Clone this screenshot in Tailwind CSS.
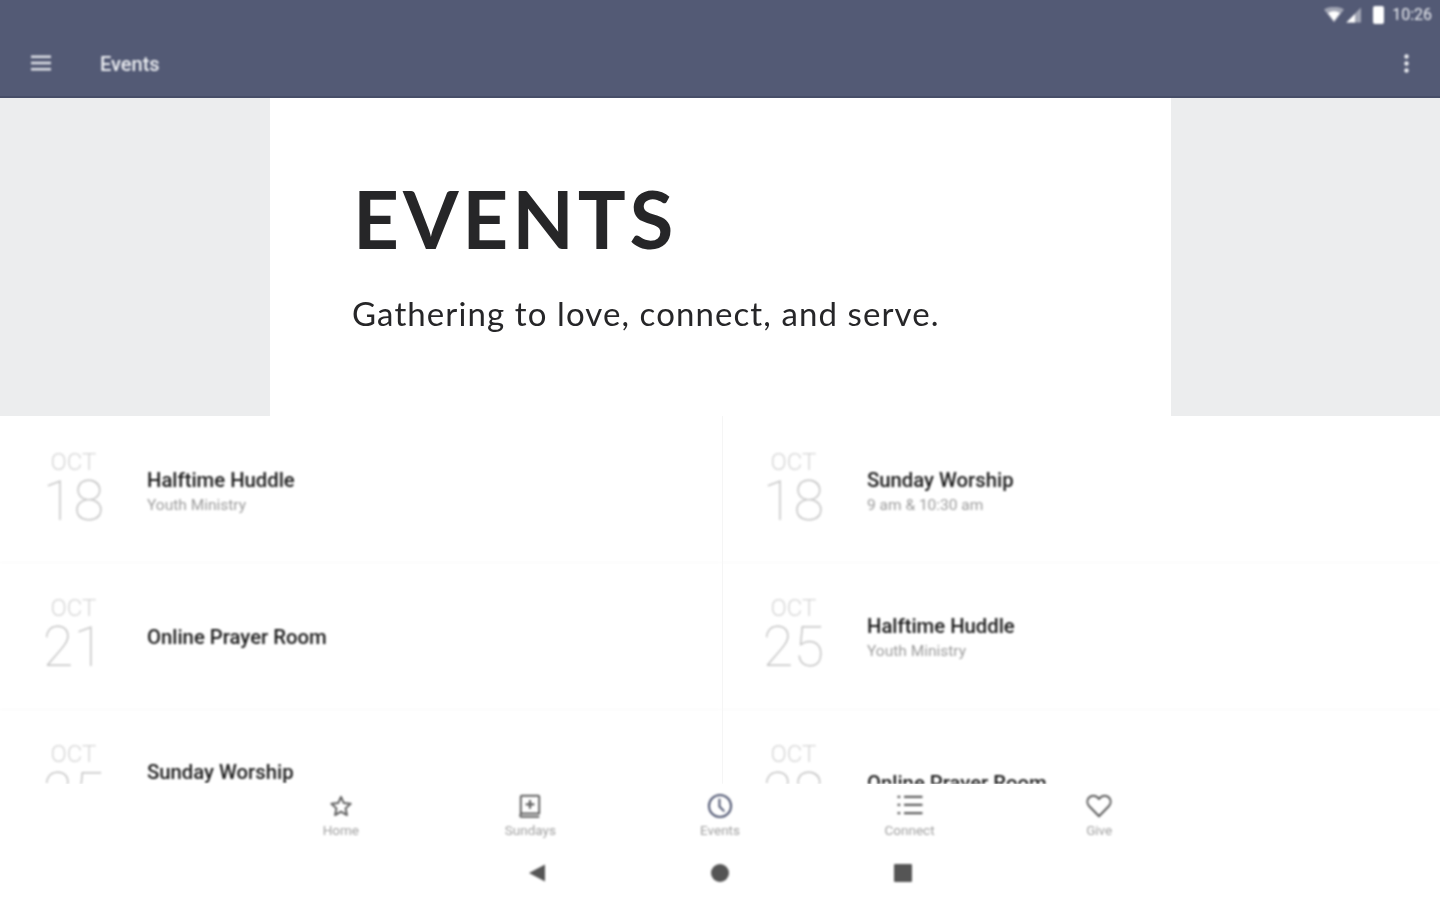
<!DOCTYPE html>
<html lang="en">
<head>
  <meta charset="UTF-8">
  <title>Events</title>
  <script src="https://cdn.jsdelivr.net/npm/@tailwindcss/browser@4"></script>
</head>
<body class="bg-white font-['Roboto',sans-serif] overflow-hidden">
  <div class="w-[1440px] h-[900px] flex flex-col overflow-hidden">

    <!-- app bar -->
    <header class="h-[98px] shrink-0 bg-[#535a75] border-b-2 border-[#474e68] flex flex-col text-[#eceef2]">
      <div class="h-[30px] flex items-center justify-end pr-2 gap-[11px] blur-[0.8px]">
        <div class="flex items-center gap-[2px]">
          <svg width="20" height="16" viewBox="0 0 20 16"><path d="M0 2.5C5.5-1 14.500-1 20 2.500L10 15.500Z" fill="#fff" fill-opacity=".45"/><path d="M4 6C7.500 3.800 12.500 3.800 16 6L10 14Z" fill="#fff"/></svg>
          <svg width="16" height="16" viewBox="0 0 16 16"><path d="M15 0.500V15.500H0Z" fill="#fff" fill-opacity=".45"/><path d="M9 7V15.500H0.500Z" fill="#fff"/></svg>
        </div>
        <div class="w-[11px] h-[18px] bg-white rounded-[2px]"></div>
        <span class="text-[16px] leading-none ml-[-3px]">10:26</span>
      </div>
      <div class="flex-1 flex items-center relative blur-[0.8px]">
        <div class="w-[100px] pl-[31px]">
          <svg width="20" height="16" viewBox="0 0 20 16" fill="#dfe1e8"><rect width="20" height="2.500" y="0.500"/><rect width="20" height="2.500" y="6.750"/><rect width="20" height="2.500" y="13"/></svg>
        </div>
        <span class="text-[20px] font-medium leading-none mt-[2px]">Events</span>
        <svg class="ml-auto mr-[31px]" width="5" height="19" viewBox="0 0 5 19" fill="#eceef2"><circle cx="2.500" cy="2.500" r="2.200"/><circle cx="2.500" cy="9.500" r="2.200"/><circle cx="2.500" cy="16.500" r="2.200"/></svg>
      </div>
    </header>

    <!-- hero -->
    <section class="h-[318px] shrink-0 bg-[#ecedee] pl-[270px]">
      <div class="w-[901px] h-full bg-white pl-[83px] pt-[72px] text-[#262628] font-['Lato',sans-serif]">
        <div class="blur-[0.5px]">
          <h1 class="text-[80px] leading-[96px] font-bold tracking-[3.900px]">EVENTS</h1>
          <p class="text-[33px] leading-[40px] mt-[27px] tracking-[1.100px] -ml-[1px]">Gathering to love, connect, and serve.</p>
        </div>
      </div>
    </section>

    <!-- event list -->
    <main class="flex-1 min-h-0 overflow-hidden relative grid grid-cols-2">
      <div class="absolute left-[722px] top-0 bottom-0 w-px bg-[#f5f5f5]"></div>

      <div class="blur-[0.8px]">
        <div class="h-[147px] flex border-b border-[#f8f8f8]">
          <div class="w-[147px] pt-[34px] text-center font-light shrink-0">
            <div class="text-[24px] leading-[24px] text-[#d6d6d6]">OCT</div>
            <div class="text-[56px] leading-[40px] mt-[7px] font-thin text-[#c4c4c4]">18</div>
          </div>
          <div class="pt-[52px]">
            <div class="text-[20.300px] leading-[24px] font-medium text-[#1a1a1a]">Halftime Huddle</div>
            <div class="text-[15.500px] leading-[24px] mt-[1px] text-[#9c9c9c]">Youth Ministry</div>
          </div>
        </div>
        <div class="h-[147px] flex border-b border-[#f8f8f8]">
          <div class="w-[147px] pt-[33px] text-center font-light shrink-0">
            <div class="text-[24px] leading-[24px] text-[#d6d6d6]">OCT</div>
            <div class="text-[56px] leading-[40px] mt-[7px] font-thin text-[#c4c4c4]">21</div>
          </div>
          <div class="pt-[62px]">
            <div class="text-[20.300px] leading-[24px] font-medium text-[#1a1a1a]">Online Prayer Room</div>
          </div>
        </div>
        <div class="h-[146px] flex">
          <div class="w-[147px] pt-[32px] text-center font-light shrink-0">
            <div class="text-[24px] leading-[24px] text-[#d6d6d6]">OCT</div>
            <div class="text-[56px] leading-[40px] mt-[7px] font-thin text-[#c4c4c4]">25</div>
          </div>
          <div class="pt-[50px]">
            <div class="text-[20.300px] leading-[24px] font-medium text-[#1a1a1a]">Sunday Worship</div>
            <div class="text-[15.500px] leading-[24px] mt-[1px] text-[#9c9c9c]">9 am &amp; 10:30 am</div>
          </div>
        </div>
      </div>

      <div class="blur-[0.8px]">
        <div class="h-[147px] flex border-b border-[#f8f8f8]">
          <div class="w-[147px] pt-[34px] text-center font-light shrink-0">
            <div class="text-[24px] leading-[24px] text-[#d6d6d6]">OCT</div>
            <div class="text-[56px] leading-[40px] mt-[7px] font-thin text-[#c4c4c4]">18</div>
          </div>
          <div class="pt-[52px]">
            <div class="text-[20.300px] leading-[24px] font-medium text-[#1a1a1a]">Sunday Worship</div>
            <div class="text-[15.500px] leading-[24px] mt-[1px] text-[#9c9c9c]">9 am &amp; 10:30 am</div>
          </div>
        </div>
        <div class="h-[147px] flex border-b border-[#f8f8f8]">
          <div class="w-[147px] pt-[33px] text-center font-light shrink-0">
            <div class="text-[24px] leading-[24px] text-[#d6d6d6]">OCT</div>
            <div class="text-[56px] leading-[40px] mt-[7px] font-thin text-[#c4c4c4]">25</div>
          </div>
          <div class="pt-[51px]">
            <div class="text-[20.300px] leading-[24px] font-medium text-[#1a1a1a]">Halftime Huddle</div>
            <div class="text-[15.500px] leading-[24px] mt-[1px] text-[#9c9c9c]">Youth Ministry</div>
          </div>
        </div>
        <div class="h-[146px] flex">
          <div class="w-[147px] pt-[32px] text-center font-light shrink-0">
            <div class="text-[24px] leading-[24px] text-[#d6d6d6]">OCT</div>
            <div class="text-[56px] leading-[40px] mt-[7px] font-thin text-[#c4c4c4]">28</div>
          </div>
          <div class="pt-[61px]">
            <div class="text-[20.300px] leading-[24px] font-medium text-[#1a1a1a]">Online Prayer Room</div>
          </div>
        </div>
      </div>
    </main>

    <!-- bottom tabs -->
    <nav class="h-[66px] shrink-0 bg-white px-[246px] grid grid-cols-5 text-[13.500px] leading-[16px] text-[#a0a0a0] blur-[0.8px]">
      <div class="flex flex-col items-center pt-[9px] gap-[3px]">
        <svg width="26" height="26" viewBox="0 0 24 24" fill="none" stroke="#5f5f5f" stroke-width="1.800" stroke-linejoin="round"><path d="M12 3.500l2.600 5.800 6.300.7-4.700 4.200 1.300 6.200L12 17.200l-5.500 3.200 1.300-6.200L3.100 10l6.300-.7z"/></svg>
        <span>Home</span>
      </div>
      <div class="flex flex-col items-center pt-[9px] gap-[3px]">
        <svg width="26" height="26" viewBox="0 0 24 24" fill="none" stroke="#5f5f5f" stroke-width="1.800"><path d="M3.500 18.500V3.500a1 1 0 0 1 1-1h15a1 1 0 0 1 1 1v15.500h-16a1.500 1.500 0 0 0 0 3h16" stroke-linejoin="round"/><path d="M12 6.500v8M8 10.500h8" stroke-width="2"/></svg>
        <span>Sundays</span>
      </div>
      <div class="flex flex-col items-center pt-[9px] gap-[3px]">
        <svg width="26" height="26" viewBox="0 0 24 24" fill="none" stroke="#535a75" stroke-width="1.900" stroke-linecap="round"><circle cx="12" cy="12" r="10.200"/><path d="M11.500 6v6.500l4 4"/></svg>
        <span>Events</span>
      </div>
      <div class="flex flex-col items-center pt-[9px] gap-[3px]">
        <svg width="26" height="26" viewBox="0 0 24 24" fill="none" stroke="#5f5f5f" stroke-width="2"><path d="M6.500 3.500h17M6.500 11h17M6.500 18.500h17"/><path d="M0.500 3.500h2.500M0.500 11h2.500M0.500 18.500h2.500"/></svg>
        <span>Connect</span>
      </div>
      <div class="flex flex-col items-center pt-[9px] gap-[3px]">
        <svg width="26" height="26" viewBox="0 0 24 24" fill="none" stroke="#5f5f5f" stroke-width="1.900" stroke-linejoin="round"><path d="M12 21.500L2.800 12a5.800 5.800 0 0 1 0-7.800 5.600 5.600 0 0 1 8 0L12 5.500l1.200-1.300a5.600 5.600 0 0 1 8 0 5.800 5.800 0 0 1 0 7.800z"/></svg>
        <span>Give</span>
      </div>
    </nav>

    <!-- android nav bar -->
    <div class="h-[50px] shrink-0 bg-white flex items-start justify-center gap-[165px] pt-[14px] blur-[0.8px]">
      <svg width="18" height="18" viewBox="0 0 18 18" fill="#555"><path d="M1 9L17 0.500V17.500Z"/></svg>
      <div class="w-[18px] h-[18px] rounded-full bg-[#555]"></div>
      <div class="w-[18px] h-[18px] bg-[#555] rounded-[1px]"></div>
    </div>
  </div>
</body>
</html>
